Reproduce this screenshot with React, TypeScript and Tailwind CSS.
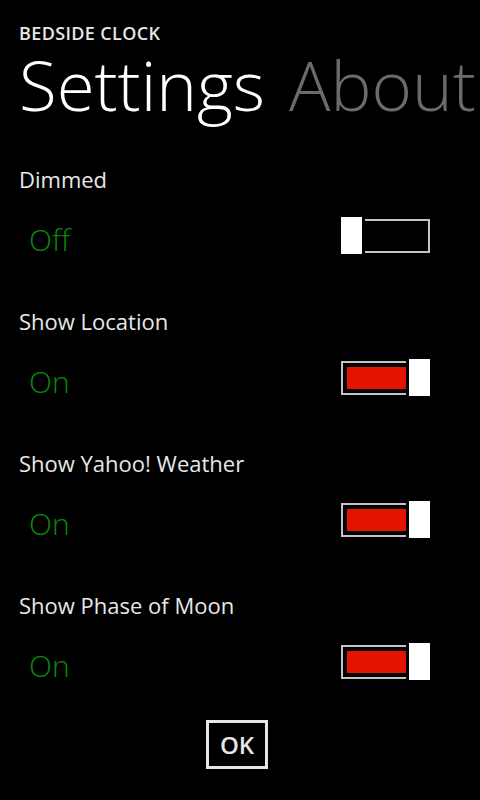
import React from 'react'

type Setting = { label: string; on: boolean }

const settings: Setting[] = [
  { label: 'Dimmed', on: false },
  { label: 'Show Location', on: true },
  { label: 'Show Yahoo! Weather', on: true },
  { label: 'Show Phase of Moon', on: true },
]

function ToggleSwitch({ on }: { on: boolean }) {
  return (
    <div className="relative w-[89px] h-[34px] border-2 border-[#c4c4c4] p-[4px] mt-[-1px]">
      {on && <div className="h-full w-[59px] bg-[#e51400]"></div>}
      <div
        className={
          on
            ? 'absolute top-[-7px] right-[-5px] w-[27px] h-[43px] border-[3px] border-black bg-white'
            : 'absolute top-[-7px] left-[-5px] w-[27px] h-[43px] border-[3px] border-black bg-white'
        }
      ></div>
    </div>
  )
}

export default function App() {
  return (
    <div className="w-[480px] h-[800px] bg-black overflow-hidden text-white font-['Open_Sans',sans-serif] flex flex-col">
      {/* Title area */}
      <div className="pl-[19px] pt-[22px]">
        <div className="text-[18px] leading-[22px] font-semibold tracking-[0.02em] text-[#e6e6e6]">BEDSIDE CLOCK</div>
        <div className="flex gap-[24px] whitespace-nowrap text-[69px] leading-[80px] font-light">
          <span className="text-white">Settings</span>
          <span className="text-[#6b6b6b]">About</span>
        </div>
      </div>

      {/* Toggle rows */}
      <div className="flex flex-col pl-[19px] pr-[50px] mt-[40px]">
        {settings.map((s) => (
          <div key={s.label} className="h-[142px] flex flex-col">
            <div className="text-[22px] leading-[30px] text-[#e8e8e8]">{s.label}</div>
            <div className="flex items-start justify-between pl-[10px] mt-[26px]">
              <span className="text-[30px] leading-[40px] font-light text-[#0a8a0a]">{s.on ? 'On' : 'Off'}</span>
              <ToggleSwitch on={s.on} />
            </div>
          </div>
        ))}
      </div>

      {/* OK button */}
      <div className="flex justify-center mt-[-12px] pr-[6px]">
        <button className="w-[62px] h-[49px] border-[3px] border-[#e6e6e6] text-[24px] leading-[30px] font-semibold text-[#e6e6e6]">OK</button>
      </div>
    </div>
  )
}
